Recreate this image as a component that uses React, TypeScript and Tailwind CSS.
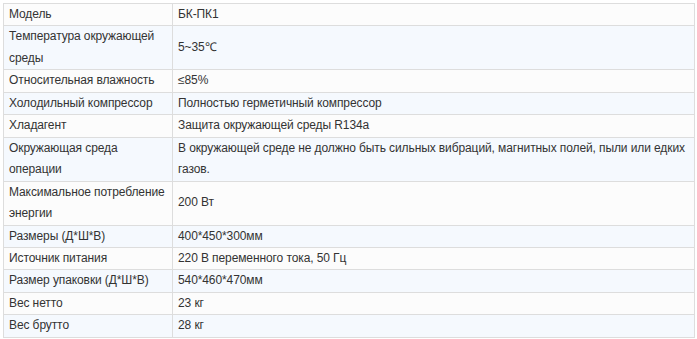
import React from "react";

const rows: [React.ReactNode, React.ReactNode][] = [
  ["Модель", "БК-ПК1"],
  [
    <>
      Температура окружающей
      <br />
      среды
    </>,
    "5~35℃",
  ],
  ["Относительная влажность", "≤85%"],
  ["Холодильный компрессор", "Полностью герметичный компрессор"],
  ["Хладагент", "Защита окружающей среды R134a"],
  [
    <>
      Окружающая среда
      <br />
      операции
    </>,
    <>
      В окружающей среде не должно быть сильных вибраций, магнитных полей, пыли или едких
      <br />
      газов.
    </>,
  ],
  [
    <>
      Максимальное потребление
      <br />
      энергии
    </>,
    "200 Вт",
  ],
  ["Размеры (Д*Ш*В)", "400*450*300мм"],
  ["Источник питания", "220 В переменного тока, 50 Гц"],
  ["Размер упаковки (Д*Ш*В)", "540*460*470мм"],
  ["Вес нетто", "23 кг"],
  ["Вес брутто", "28 кг"],
];

const App = () => {
  return (
    <div className="w-[697px] h-[339px] bg-white overflow-hidden">
      <table
        className="m-[3px] w-[692px] table-fixed border-collapse text-[12px] tracking-[-0.1px] leading-[21.45px] text-[#333]"
        style={{ fontFamily: '"Liberation Sans", Arial, sans-serif' }}
      >
        <colgroup>
          <col className="w-[169px]" />
          <col />
        </colgroup>
        <tbody>
          {rows.map(([label, value], i) => (
            <tr key={i} className={i % 2 === 0 ? "bg-[#fcfcfc]" : "bg-[#f5f9fe]"}>
              <td className="border border-[#dddddd] px-[5px] py-0 align-middle whitespace-nowrap">
                {label}
              </td>
              <td className="border border-[#dddddd] px-[5px] py-0 align-middle whitespace-nowrap">
                {value}
              </td>
            </tr>
          ))}
        </tbody>
      </table>
    </div>
  );
};

export default App;
